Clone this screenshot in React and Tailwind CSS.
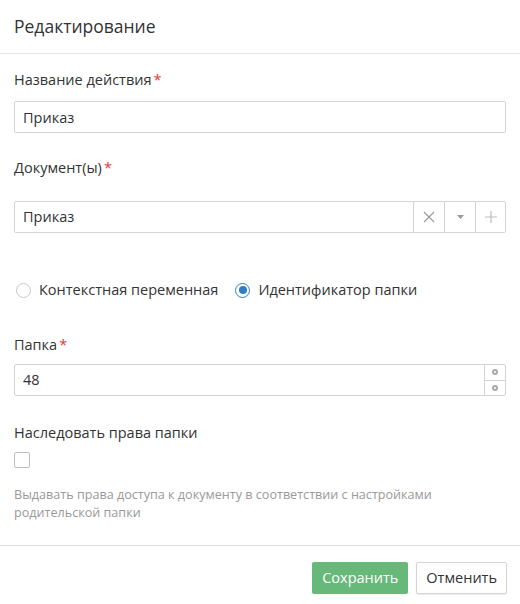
import { useState } from "react";

const font = { fontFamily: '"Open Sans", "Liberation Sans", sans-serif' };

function Label({ children, required }) {
  return (
    <div className="h-[20px] text-[14.5px] leading-[20px] text-[#333]">
      {children}
      {required && <span className="ml-[2px] text-[#e53935]">*</span>}
    </div>
  );
}

function Radio({ checked, label, onClick }) {
  return (
    <button type="button" onClick={onClick} className="flex items-center gap-[8px] h-[20px]">
      <span
        className={
          "w-[15px] h-[15px] rounded-full border flex items-center justify-center bg-white " +
          (checked ? "border-[#2f7fc6]" : "border-[#c8c8c8]")
        }
      >
        {checked && <span className="w-[8px] h-[8px] rounded-full bg-[#2f7fc6]" />}
      </span>
      <span className="text-[14.5px] text-[#333]">{label}</span>
    </button>
  );
}

export default function App() {
  const [mode, setMode] = useState("folder");
  const [inherit, setInherit] = useState(false);

  return (
    <div className="w-[520px] h-[604px] bg-white" style={font}>

      {/* HEADER */}
      <div className="h-[54px] border-b border-[#e5e5e5] px-[14px] flex items-center">
        <h1 className="text-[17.5px] text-[#333] pb-[1px]">Редактирование</h1>
      </div>

      {/* BODY */}
      <div className="px-[14px] pt-[16px]">
        <Label required>Название действия</Label>
        <input
          defaultValue="Приказ"
          className="mt-[11px] w-full h-[32px] border border-[#d4d4d4] rounded-[2px] px-[8px] text-[14.5px] text-[#333] outline-none"
        />

        <div className="mt-[25px]">
          <Label required>Документ(ы)</Label>
        </div>
        <div className="mt-[23px] flex h-[32px] border border-[#d4d4d4] rounded-[2px]">
          <div className="flex-1 px-[8px] flex items-center text-[14.5px] text-[#333]">Приказ</div>
          <div className="w-[31px] border-l border-[#d4d4d4] flex items-center justify-center">
            <svg width="12" height="12" viewBox="0 0 12 12" stroke="#999" strokeWidth="1.1" fill="none">
              <path d="M1 1L11 11M11 1L1 11" />
            </svg>
          </div>
          <div className="w-[31px] border-l border-[#d4d4d4] flex items-center justify-center">
            <svg width="7" height="4" viewBox="0 0 7 4" fill="#999">
              <path d="M0 0H7L3.5 4Z" />
            </svg>
          </div>
          <div className="w-[30px] border-l border-[#d4d4d4] flex items-center justify-center">
            <svg width="12" height="12" viewBox="0 0 12 12" stroke="#bbb" strokeWidth="1.2" fill="none">
              <path d="M6 0V12M0 6H12" />
            </svg>
          </div>
        </div>

        <div className="mt-[47px] flex items-center gap-[17px] pl-[2px]">
          <Radio checked={mode === "context"} label="Контекстная переменная" onClick={() => setMode("context")} />
          <Radio checked={mode === "folder"} label="Идентификатор папки" onClick={() => setMode("folder")} />
        </div>

        <div className="mt-[35px]">
          <Label required>Папка</Label>
        </div>
        <div className="mt-[9px] flex h-[32px] border border-[#d4d4d4] rounded-[2px]">
          <input
            defaultValue="48"
            className="flex-1 min-w-0 px-[8px] text-[14.5px] text-[#333] outline-none"
          />
          <div className="w-[21px] border-l border-[#d4d4d4] flex flex-col">
            <div className="flex-1 flex items-center justify-center border-b border-[#d4d4d4]">
              <span className="w-[6px] h-[6px] rounded-full border-[2px] border-[#aaa]" />
            </div>
            <div className="flex-1 flex items-center justify-center">
              <span className="w-[6px] h-[6px] rounded-full border-[2px] border-[#aaa]" />
            </div>
          </div>
        </div>

        <div className="mt-[27px]">
          <Label>Наследовать права папки</Label>
        </div>
        <button
          type="button"
          onClick={() => setInherit(!inherit)}
          className="mt-[9px] block w-[16px] h-[16px] border border-[#bdbdbd] rounded-[2px] bg-white"
        />

        <p className="mt-[18px] text-[12.6px] leading-[18px] text-[#999]">
          Выдавать права доступа к документу в соответствии с настройками
          <br />
          родительской папки
        </p>
      </div>

      {/* FOOTER */}
      <div className="mt-[23px] border-t border-[#dcdcdc] px-[13px] pt-[16px] flex justify-end gap-[8px]">
        <button className="h-[32px] px-[10px] rounded-[2px] bg-[#67b979] text-white text-[14.5px]">
          Сохранить
        </button>
        <button className="h-[32px] px-[9px] rounded-[2px] border border-[#d4d4d4] bg-white text-[#333] text-[14.5px] shadow-[0_1px_1px_rgba(0,0,0,0.08)]">
          Отменить
        </button>
      </div>

    </div>
  );
}
